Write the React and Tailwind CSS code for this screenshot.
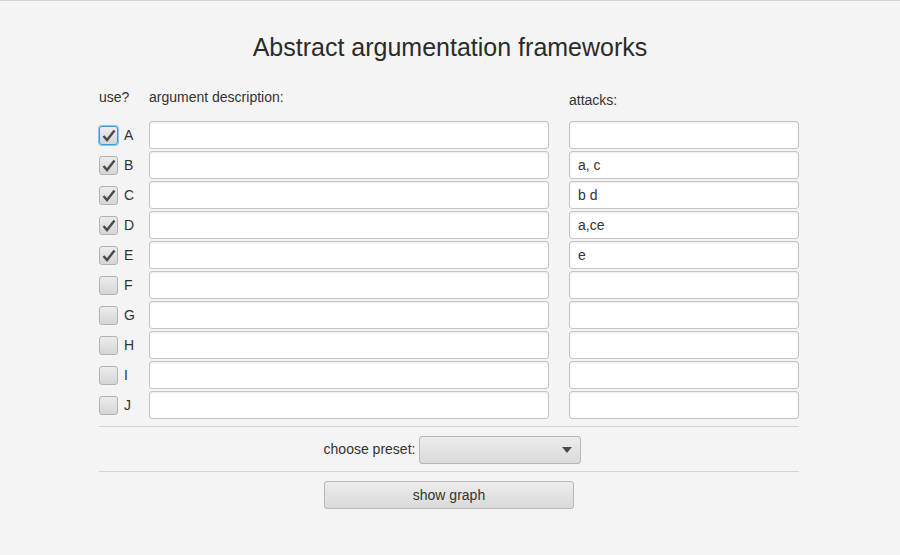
import { useState } from 'react'

const ROWS = [
  { id: 'A', use: true, attacks: '', focus: true },
  { id: 'B', use: true, attacks: 'a, c' },
  { id: 'C', use: true, attacks: 'b d' },
  { id: 'D', use: true, attacks: 'a,ce' },
  { id: 'E', use: true, attacks: 'e' },
  { id: 'F', use: false, attacks: '' },
  { id: 'G', use: false, attacks: '' },
  { id: 'H', use: false, attacks: '' },
  { id: 'I', use: false, attacks: '' },
  { id: 'J', use: false, attacks: '' },
]

const FONT = { fontFamily: '"Liberation Sans", Arial, sans-serif' }

function Check({ checked, focus }) {
  return (
    <div
      className={`w-[19px] h-[19px] rounded-[3px] flex items-center justify-center bg-gradient-to-b from-[#ececec] to-[#d6d6d6] ${
        focus ? 'border border-[#3c9ad6] ring-1 ring-[#8dc4ea]' : 'border border-[#b2b2b2]'
      }`}
    >
      {checked && (
        <svg width="14" height="13" viewBox="0 0 14 13">
          <path d="M1.5 7 L5 11 L12.5 1.5" fill="none" stroke="#4b4b4b" strokeWidth="2.4" />
        </svg>
      )}
    </div>
  )
}

function Field({ value, width }) {
  return (
    <div
      className={`${width} h-[28px] rounded-[3px] border border-[#c4c4c4] bg-white shadow-[inset_0_1px_2px_rgba(0,0,0,0.08)] px-[8px] flex items-center text-[14px] text-[#333]`}
    >
      {value}
    </div>
  )
}

export default function App() {
  const [rows] = useState(ROWS)

  return (
    <div className="w-[900px] h-[555px] bg-[#f4f4f4] border-t border-[#d6d2cc] text-[#333]" style={FONT}>
      <h1 className="text-center text-[25px] leading-none pt-[34px] text-[#2b2b2b]">
        Abstract argumentation frameworks
      </h1>

      <div className="w-[700px] ml-[99px] mt-[27px]">
        {/* header row */}
        <div className="flex text-[14px] h-[34px]">
          <div className="w-[50px]">use?</div>
          <div className="w-[420px]">argument description:</div>
          <div className="pt-[3px]">attacks:</div>
        </div>

        {/* rows */}
        <div className="flex flex-col gap-[2px]">
          {rows.map((r) => (
            <div key={r.id} className="flex items-center h-[28px]">
              <div className="w-[50px] flex items-center gap-[6px]">
                <Check checked={r.use} focus={r.focus} />
                <span className="text-[14px] text-[#333]">{r.id}</span>
              </div>
              <Field value="" width="w-[400px]" />
              <div className="w-[20px]" />
              <Field value={r.attacks} width="w-[230px]" />
            </div>
          ))}
        </div>

        <div className="mt-[7px] border-t border-[#d4d4d4]" />

        <div className="flex items-center justify-center gap-[4px] h-[44px] pt-[1px] pl-[7px]">
          <span className="text-[14px]">choose preset:</span>
          <div className="w-[162px] h-[28px] rounded-[3px] border border-[#b8b8b8] bg-gradient-to-b from-[#ececec] to-[#dadada] flex items-center justify-end pr-[8px]">
            <svg width="10" height="6" viewBox="0 0 10 6">
              <path d="M0 0 L10 0 L5 6 Z" fill="#4a4a4a" />
            </svg>
          </div>
        </div>

        <div className="border-t border-[#d4d4d4]" />

        <div className="flex justify-center pt-[9px]">
          <button className="w-[250px] h-[28px] rounded-[3px] border border-[#b8b8b8] bg-gradient-to-b from-[#ececec] to-[#dadada] text-[14px] text-[#333]">
            show graph
          </button>
        </div>
      </div>
    </div>
  )
}
